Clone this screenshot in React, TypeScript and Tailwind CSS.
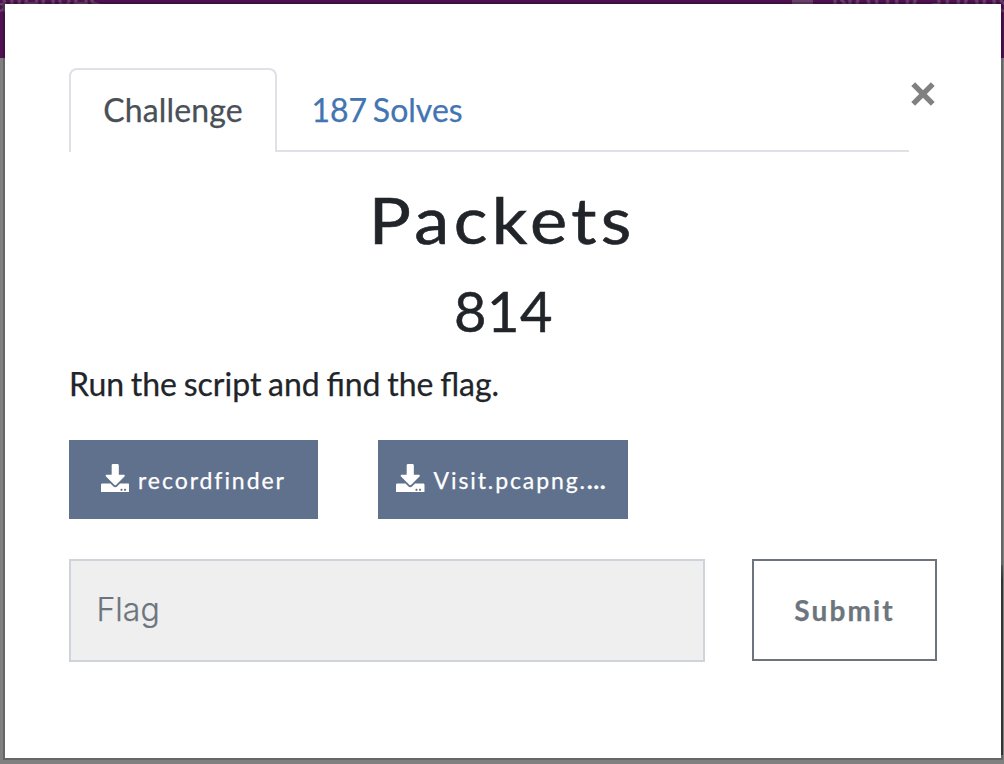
import type { ReactNode } from "react";
import { FaDownload } from "react-icons/fa";

function Navbar() {
  return (
    <div className="relative h-[58px] bg-[#4f1151] overflow-hidden font-['Lato',sans-serif] text-[30px] leading-[30px] text-[#684069]">
      <span className="absolute left-[-45px] top-[-15px] tracking-[0.5px] [-webkit-text-stroke:0.5px]">Challenges</span>
      <span className="absolute left-[792px] top-0 h-[5px] w-[21px] bg-[#684069]" />
      <span className="absolute left-[831px] top-[-15px] tracking-[1px] [-webkit-text-stroke:0.5px]">Notifications</span>
    </div>
  );
}

function FileButton({ children, className }: { children: ReactNode; className: string }) {
  return (
    <button className={`flex h-[79px] items-center bg-[#60718d] pt-px text-white ${className}`}>
      <FaDownload className="mb-[4px] size-[28.5px] shrink-0" />
      <span>{children}</span>
    </button>
  );
}

export default function App() {
  return (
    <div className="relative h-[764px] w-[1004px] overflow-hidden bg-[#808080]">
      <Navbar />
      <div className="absolute left-[999px] top-[565px] h-[190px] w-[4px] bg-linear-to-b from-[#666666] via-[#404040] via-8% to-[#404040]" />
      <main className="absolute left-[5px] top-[4px] flex h-[754px] w-[996px] flex-col bg-white pl-[64px] pr-[64px] pt-[64px] font-['Lato',sans-serif] text-[#212529] shadow-[0_0_0_2px_rgba(0,0,0,0.2)] [-webkit-text-stroke:0.25px]">
        <div className="flex h-[84px]">
          <nav className="flex w-[840px] border-b-2 border-[#dee2e6] text-[32px]">
            <span className="-mb-[2px] flex h-[84px] w-[208px] items-center justify-center rounded-t-[8px] border-2 border-b-0 border-[#dee2e6] bg-white text-[#495057]">
              <span className="block pb-[2px] tracking-[0.15px]">Challenge</span>
            </span>
            <span className="flex h-[84px] items-center pb-px pl-[34.5px] text-[#4275b2] [word-spacing:-2.5px]">187 Solves</span>
          </nav>
          <svg className="ml-[2px] mt-[14px] size-[24px] shrink-0" viewBox="0 0 24 24" fill="none" stroke="#808080" strokeWidth="5.4">
            <path d="M2.2 2.2L21.8 21.8M21.8 2.2L2.2 21.8" />
          </svg>
        </div>
        <h2 className="mt-[28px] h-[80px] text-center text-[64px] font-normal leading-[80px]">
          <span className="inline-block scale-x-[1.1] pr-[2px] tracking-[4px] [-webkit-text-stroke:0.6px]">Packets</span>
        </h2>
        <h3 className="mt-[15px] h-[72px] pl-px text-center text-[56px] leading-[72px] tracking-[0.6px] [-webkit-text-stroke:0.5px]">814</h3>
        <p className="mt-[13px] h-[48px] text-[32px] leading-[48px] [word-spacing:-1.5px]">Run the script and find the flag.</p>
        <div className="mt-[32px] flex gap-[60px] text-[23px]">
          <FileButton className="w-[249px] gap-[9px] pl-[31.5px] tracking-[1.95px]">recordfinder</FileButton>
          <FileButton className="w-[250px] gap-[9px] pl-[18px] tracking-[1.9px]">
            Visit.pcapng.<span className="font-black tracking-[1.1px]">...</span>
          </FileButton>
        </div>
        <form className="mt-[40px] flex items-start gap-[47px]">
          <input
            className="h-[103px] w-[636px] border-2 border-[#ced4da] bg-[#efefef] px-[25.5px] pb-[2px] font-['Inter',sans-serif] text-[32px] font-light text-[#6c757d] outline-none placeholder:text-[#6c757d]"
            placeholder="Flag"
          />
          <button type="button" className="h-[102px] w-[185px] shrink-0 border-2 border-[#6c757d] pb-px text-[28px] font-bold tracking-[2.1px] text-[#6c757d]">
            Submit
          </button>
        </form>
      </main>
    </div>
  );
}
